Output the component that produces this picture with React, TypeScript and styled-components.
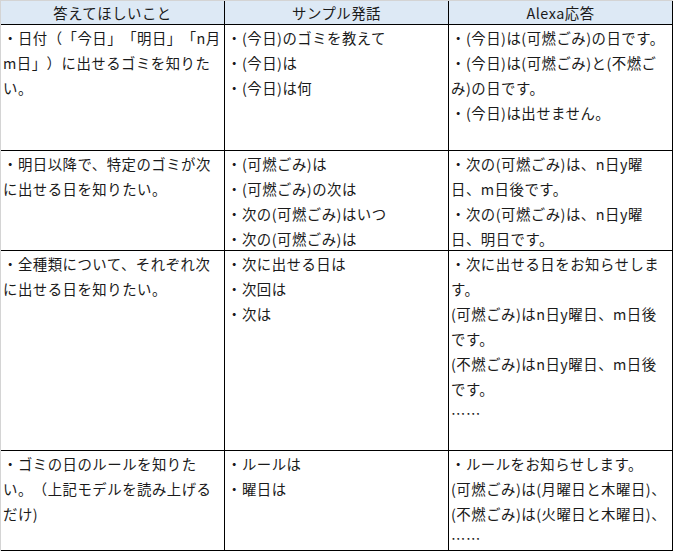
import styled, { createGlobalStyle } from "styled-components";

const GlobalStyle = createGlobalStyle`
  html, body {
    margin: 0;
    padding: 0;
    background: #ffffff;
  }
`;

const Sheet = styled.div`
  display: grid;
  grid-template-columns: repeat(3, 224px);
  width: 673px;
  border-top: 1px solid #d4d4d4;
  border-left: 1px solid #d4d4d4;
  box-sizing: border-box;
  font-family: "Noto Sans CJK JP", "Noto Sans", sans-serif;
  font-size: 14.4px;
  letter-spacing: 0.5px;
  text-spacing-trim: space-all;
  color: #1a1a1a;
`;

const HeaderCell = styled.div`
  box-sizing: border-box;
  height: 24px;
  line-height: 23px;
  text-align: center;
  background: #dde9f5;
  border-right: 1px solid #000;
  border-bottom: 1px solid #000;
  overflow: hidden;
`;

const Cell = styled.div<{ $height: number }>`
  box-sizing: border-box;
  height: ${({ $height }) => $height}px;
  padding-left: 2px;
  border-right: 1px solid #000;
  border-bottom: 1px solid #000;
  overflow: hidden;
`;

const Line = styled.div`
  height: 25px;
  line-height: 25px;
  white-space: nowrap;
`;

type Row = {
  height: number;
  cells: string[][];
};

const headers = ["答えてほしいこと", "サンプル発話", "Alexa応答"];

const rows: Row[] = [
  {
    height: 126,
    cells: [
      ["・日付（「今日」「明日」「n月", "m日」）に出せるゴミを知りた", "い。"],
      ["・(今日)のゴミを教えて", "・(今日)は", "・(今日)は何"],
      [
        "・(今日)は(可燃ごみ)の日です。",
        "・(今日)は(可燃ごみ)と(不燃ご",
        "み)の日です。",
        "・(今日)は出せません。",
      ],
    ],
  },
  {
    height: 100,
    cells: [
      ["・明日以降で、特定のゴミが次", "に出せる日を知りたい。"],
      ["・(可燃ごみ)は", "・(可燃ごみ)の次は", "・次の(可燃ごみ)はいつ", "・次の(可燃ごみ)は"],
      [
        "・次の(可燃ごみ)は、n日y曜",
        "日、m日後です。",
        "・次の(可燃ごみ)は、n日y曜",
        "日、明日です。",
      ],
    ],
  },
  {
    height: 200,
    cells: [
      ["・全種類について、それぞれ次", "に出せる日を知りたい。"],
      ["・次に出せる日は", "・次回は", "・次は"],
      [
        "・次に出せる日をお知らせしま",
        "す。",
        "(可燃ごみ)はn日y曜日、m日後",
        "です。",
        "(不燃ごみ)はn日y曜日、m日後",
        "です。",
        "……",
      ],
    ],
  },
  {
    height: 100,
    cells: [
      ["・ゴミの日のルールを知りた", "い。（上記モデルを読み上げる", "だけ)"],
      ["・ルールは", "・曜日は"],
      [
        "・ルールをお知らせします。",
        "(可燃ごみ)は(月曜日と木曜日)、",
        "(不燃ごみ)は(火曜日と木曜日)、",
        "……",
      ],
    ],
  },
];

export default function App() {
  return (
    <>
      <GlobalStyle />
      <Sheet>
        {headers.map((h) => (
          <HeaderCell key={h}>{h}</HeaderCell>
        ))}
        {rows.map((row, r) =>
          row.cells.map((lines, c) => (
            <Cell key={`${r}-${c}`} $height={row.height}>
              {lines.map((line, i) => (
                <Line key={i}>{line}</Line>
              ))}
            </Cell>
          ))
        )}
      </Sheet>
    </>
  );
}
